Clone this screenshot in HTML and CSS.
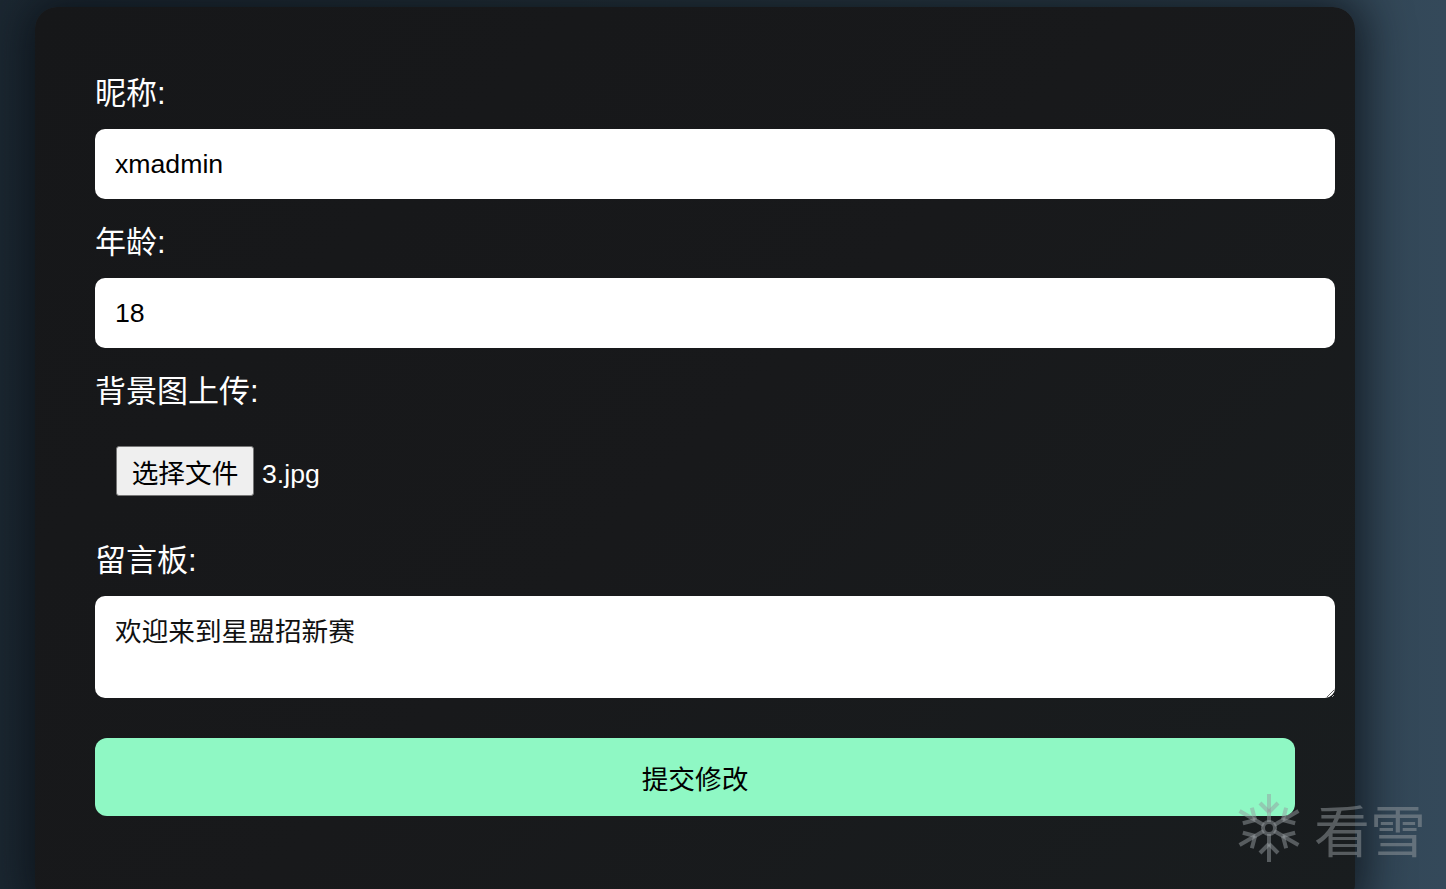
FILE: index.html
```html
<!DOCTYPE html>
<html lang="zh">
<head>
<meta charset="utf-8">
<title>修改信息</title>
<link rel="stylesheet" href="styles.css">
</head>
<body>
<div class="page">
  <form class="card">
    <label class="label" for="nick">昵称:</label>
    <input class="field" id="nick" type="text" value="xmadmin">
    <label class="label" for="age">年龄:</label>
    <input class="field" id="age" type="text" value="18">
    <label class="label">背景图上传:</label>
    <div class="file-row">
      <span class="file-btn">选择文件</span>
      <span class="file-name">3.jpg</span>
    </div>
    <label class="label" for="msg">留言板:</label>
    <textarea class="area" id="msg">欢迎来到星盟招新赛</textarea>
    <button class="submit" type="button">提交修改</button>
  </form>
</div>
<div class="watermark">
  <svg class="flake" width="66" height="72" viewBox="-33 -36 66 72" fill="none" stroke="currentColor" stroke-width="4" stroke-linecap="butt">
    <g id="arm">
      <line x1="0" y1="-6" x2="0" y2="-34"/>
      <line x1="0" y1="-16" x2="-9" y2="-25"/>
      <line x1="0" y1="-16" x2="9" y2="-25"/>
    </g>
    <use href="#arm" transform="rotate(60)"/>
    <use href="#arm" transform="rotate(120)"/>
    <use href="#arm" transform="rotate(180)"/>
    <use href="#arm" transform="rotate(240)"/>
    <use href="#arm" transform="rotate(300)"/>
    <circle cx="0" cy="0" r="6"/>
  </svg>
  <span class="wm-text">看雪</span>
</div>
</body>
</html>
```
FILE: styles.css
```css
html, body {
  margin: 0;
  padding: 0;
  height: 100%;
  overflow: hidden;
}
body {
  background: linear-gradient(90deg, #1c2832 0%, #27363f 40%, #2f424e 75%, #34495a 100%);
  font-family: "Noto Sans CJK SC", "Liberation Sans", sans-serif;
  position: relative;
}
.page {
  padding: 7px 0 0 35px;
}
.card {
  width: 1200px;
  padding: 60px 60px 60px 60px;
  background: linear-gradient(135deg, #161719 0%, #18191b 50%, #191d1f 100%);
  border-radius: 22px;
  box-shadow: 0 0 45px 10px rgba(8, 14, 20, 0.75);
  display: flex;
  flex-direction: column;
  min-height: 780px;
}
.label {
  display: block;
  color: #ffffff;
  font-size: 31px;
  line-height: 40px;
  height: 40px;
  padding-top: 2px;
  margin: 0 0 15px 0;
  font-family: "Liberation Sans", "Noto Sans CJK SC", sans-serif;
}
.card > .label:first-child {
  margin-top: 5px;
}
.field {
  width: 1200px;
  height: 30px;
  padding: 20px;
  margin: 0 0 22px 0;
  border: none;
  border-radius: 10px;
  background: #ffffff;
  font-family: "Liberation Sans", "Noto Sans CJK SC", sans-serif;
  font-size: 26.67px;
  color: #000;
  outline: none;
}
.file-row {
  display: flex;
  align-items: center;
  padding: 20px 21px;
  height: 48px;
  margin: 0 0 24px 0;
}
.file-btn {
  display: inline-flex;
  align-items: center;
  justify-content: center;
  box-sizing: border-box;
  width: 138px;
  height: 50px;
  background: #efefef;
  border: 1px solid #767676;
  border-radius: 3px;
  color: #000;
  font-size: 26.67px;
  font-family: "Noto Sans CJK SC", sans-serif;
}
.file-name {
  margin-left: 8px;
  padding-top: 6px;
  color: #ffffff;
  font-size: 26.67px;
  font-family: "Liberation Sans", "Noto Sans CJK SC", sans-serif;
}
.area {
  width: 1200px;
  height: 62px;
  padding: 20px;
  margin: 0 0 40px 0;
  border: none;
  border-radius: 10px;
  background: #ffffff;
  font-family: "Liberation Serif", "Noto Sans CJK SC", serif;
  font-size: 26.67px;
  line-height: 32px;
  color: #111;
  outline: none;
  resize: vertical;
}
.submit {
  width: 1200px;
  height: 78px;
  border: none;
  border-radius: 12px;
  background: #8ff8c4;
  color: #000;
  font-size: 26.67px;
  padding-top: 2px;
  font-family: "Noto Sans CJK SC", sans-serif;
  cursor: pointer;
}
.watermark {
  position: absolute;
  left: 1236px;
  top: 792px;
  display: flex;
  align-items: center;
  gap: 12px;
  color: rgba(150, 155, 160, 0.5);
}
.flake {
  display: block;
}
.wm-text {
  font-size: 56px;
  line-height: 64px;
  font-family: "Noto Sans CJK SC", sans-serif;
  font-weight: 400;
}
```
